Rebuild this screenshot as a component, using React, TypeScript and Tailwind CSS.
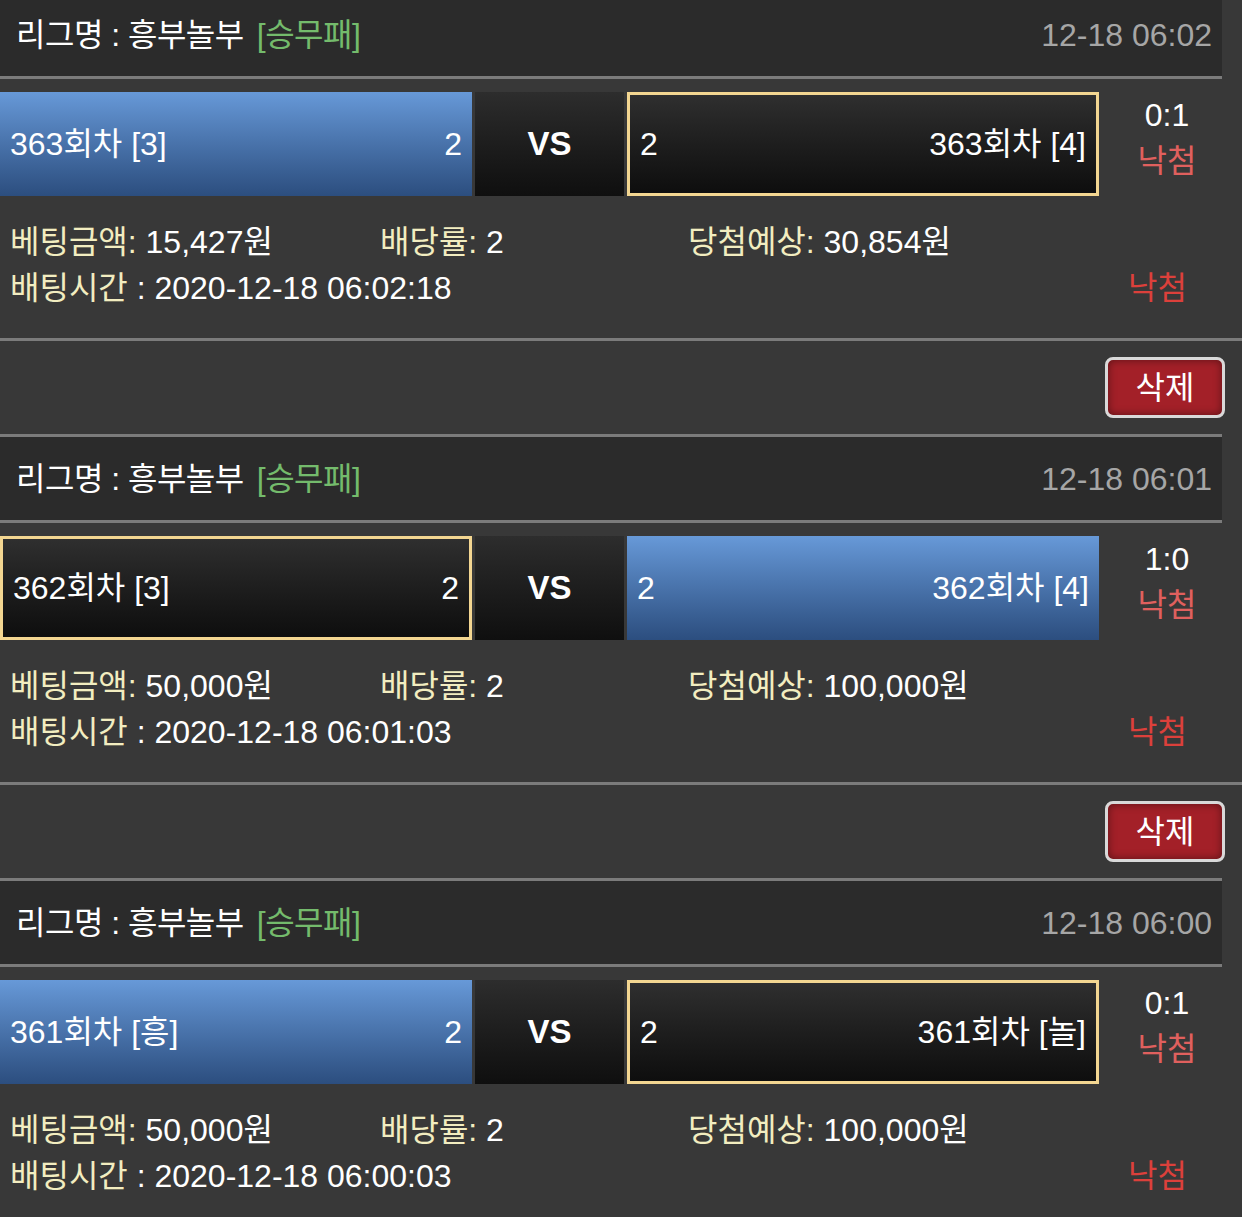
import React from 'react';

type Side = 'blue' | 'dark';

type Bet = {
  id: number;
  date: string;
  home: string;
  away: string;
  homeSide: Side;
  score: string;
  amount: string;
  expected: string;
  time: string;
};

const BETS: Bet[] = [
  {
    id: 363,
    date: '12-18 06:02',
    home: '363회차 [3]',
    away: '363회차 [4]',
    homeSide: 'blue',
    score: '0:1',
    amount: '15,427원',
    expected: '30,854원',
    time: '2020-12-18 06:02:18',
  },
  {
    id: 362,
    date: '12-18 06:01',
    home: '362회차 [3]',
    away: '362회차 [4]',
    homeSide: 'dark',
    score: '1:0',
    amount: '50,000원',
    expected: '100,000원',
    time: '2020-12-18 06:01:03',
  },
  {
    id: 361,
    date: '12-18 06:00',
    home: '361회차 [흥]',
    away: '361회차 [놀]',
    homeSide: 'blue',
    score: '0:1',
    amount: '50,000원',
    expected: '100,000원',
    time: '2020-12-18 06:00:03',
  },
];

// team box: blue = picked side, dark = other side with gold outline
function TeamBox({ side, children }: { side: Side; children: React.ReactNode }) {
  if (side === 'blue') {
    return (
      <div className="w-[472px] h-full flex items-center justify-between px-[10px] bg-gradient-to-b from-[#6799d8] to-[#2c4e7f] text-white">
        {children}
      </div>
    );
  }
  return (
    <div className="w-[472px] h-full flex items-center justify-between px-[10px] border-[3px] border-[#f3d691] bg-gradient-to-b from-[#2f2f2f] to-[#0e0e0e] text-white">
      {children}
    </div>
  );
}

function BetCard({ bet }: { bet: Bet }) {
  const awaySide: Side = bet.homeSide === 'blue' ? 'dark' : 'blue';
  return (
    <div>
      {/* header */}
      <div className="mr-[20px] h-[89px] flex items-center justify-between pl-[16px] pr-[10px] bg-[#2b2b2b] border-y-[3px] border-[#7b7b7b] text-[32px] tracking-[-0.5px]">
        <div className="flex items-center">
          <span className="text-white">리그명 : 흥부놀부</span>
          <span className="ml-[13px] text-[#74bb6c]">[승무패]</span>
        </div>
        <span className="text-[#a6a6a6] tracking-normal">{bet.date}</span>
      </div>

      {/* match row */}
      <div className="mt-[13px] h-[104px] flex items-stretch gap-[3px] text-[32px]">
        <TeamBox side={bet.homeSide}>
          <span>{bet.home}</span>
          <span>2</span>
        </TeamBox>
        <div className="w-[149px] flex items-center justify-center bg-gradient-to-b from-[#2d2d2d] to-[#0f0f0f] text-white text-[33px] font-bold">
          VS
        </div>
        <TeamBox side={awaySide}>
          <span>2</span>
          <span>{bet.away}</span>
        </TeamBox>
        <div className="flex-1 flex flex-col items-center pr-[10px] leading-[46px] text-[32px]">
          <span className="text-white">{bet.score}</span>
          <span className="text-[#e0605e]">낙첨</span>
        </div>
      </div>

      {/* bet info */}
      <div className="pt-[23px] pb-[27px] pl-[10px] text-[32px] leading-[46px] border-b-[3px] border-[#7b7b7b]">
        <div className="flex">
          <div className="w-[370px]">
            <span className="text-[#f2edc0]">베팅금액: </span>
            <span className="text-white">{bet.amount}</span>
          </div>
          <div className="w-[308px]">
            <span className="text-[#f2edc0]">배당률: </span>
            <span className="text-white">2</span>
          </div>
          <div>
            <span className="text-[#f2edc0]">당첨예상: </span>
            <span className="text-white">{bet.expected}</span>
          </div>
        </div>
        <div className="flex justify-between pr-[55px]">
          <div>
            <span className="text-[#f2edc0]">배팅시간</span>
            <span className="text-white"> : {bet.time}</span>
          </div>
          <span className="text-[#dc403b]">낙첨</span>
        </div>
      </div>

      {/* actions */}
      <div className="h-[93px] flex items-center justify-end pr-[17px]">
        <button className="w-[120px] h-[61px] rounded-[8px] border-[3px] border-[#d9d9d9] bg-[#a32028] shadow-[inset_0_0_8px_rgba(0,0,0,0.45)] text-white text-[32px]">
          삭제
        </button>
      </div>
    </div>
  );
}

export default function App() {
  return (
    <div className="w-[1242px] h-[1217px] overflow-hidden bg-[#383838] font-['Liberation_Sans','Noto_Sans_CJK_KR',sans-serif]">
      <div className="-mt-[10px]">
        {BETS.map((b) => (
          <BetCard key={b.id} bet={b} />
        ))}
      </div>
    </div>
  );
}
